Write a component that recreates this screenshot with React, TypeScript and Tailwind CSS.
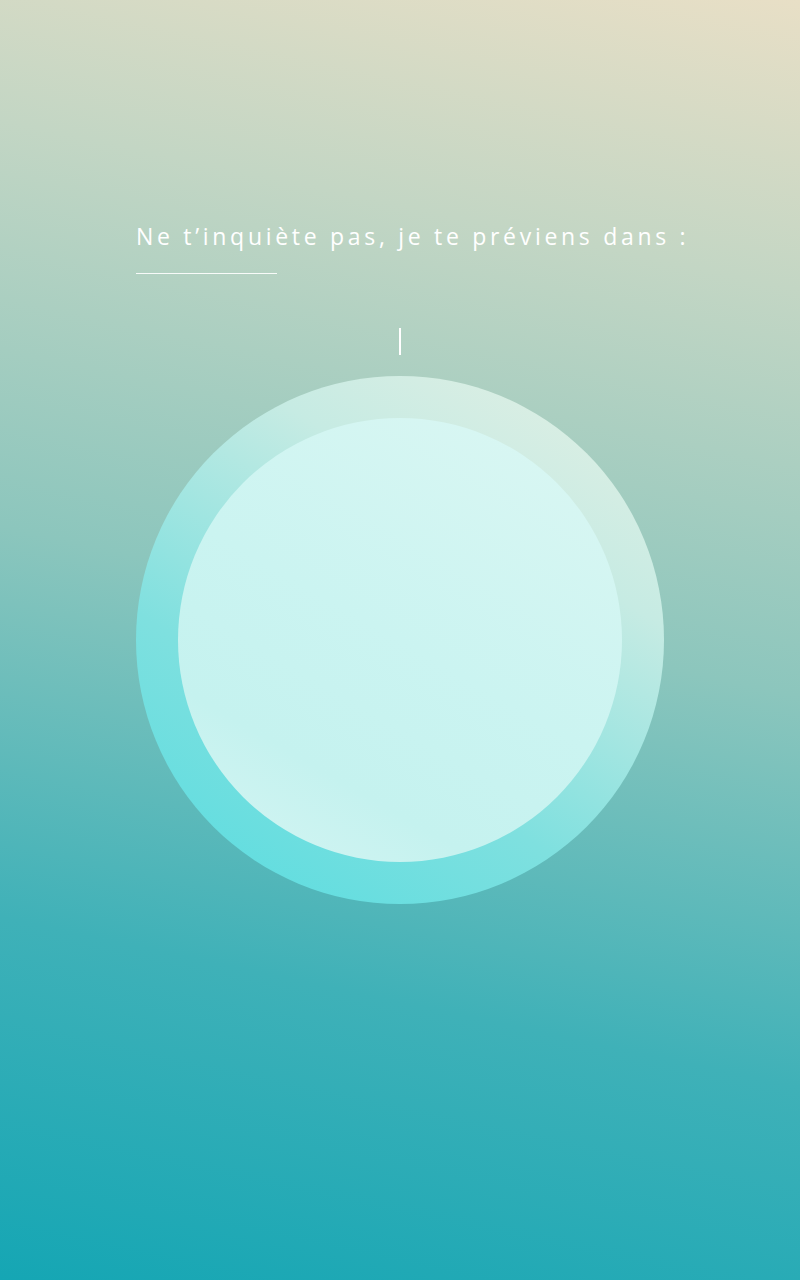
export default function App() {
  return (
    <div className="relative h-[1280px] w-[800px] overflow-hidden bg-[linear-gradient(12deg,#15a6b4_0%,#3fb1b8_25%,#8cc6bd_52%,#c3d6c4_80%,#e8dfc6_100%)] font-['Open_Sans',sans-serif]">
      <div className="flex flex-col pt-[220px]">
        <div className="pl-[136px]">
          <h1 className="whitespace-nowrap text-[23px] font-normal leading-[32px] tracking-[3.7px] text-white">
            Ne t’inquiète pas, je te préviens dans :
          </h1>
          <div className="mt-[21px] h-px w-[141px] bg-white/90" />
        </div>

        {/* caret */}
        <div className="mt-[54px] flex justify-center">
          <div className="h-[27px] w-[2px] bg-white" />
        </div>

        {/* timer circle */}
        <div className="mt-[21px] flex justify-center">
          <div className="flex h-[528px] w-[528px] items-center justify-center rounded-full bg-[linear-gradient(30deg,#55dce0_0%,#7fe0df_35%,#c6ebe3_70%,#e6f0e4_100%)]">
            <div className="h-[444px] w-[444px] rounded-full bg-[linear-gradient(210deg,#dcf7f3_0%,#cbf4f1_50%,#c5f2ef_75%,#d5f5f3_100%)]" />
          </div>
        </div>
      </div>
    </div>
  );
}
